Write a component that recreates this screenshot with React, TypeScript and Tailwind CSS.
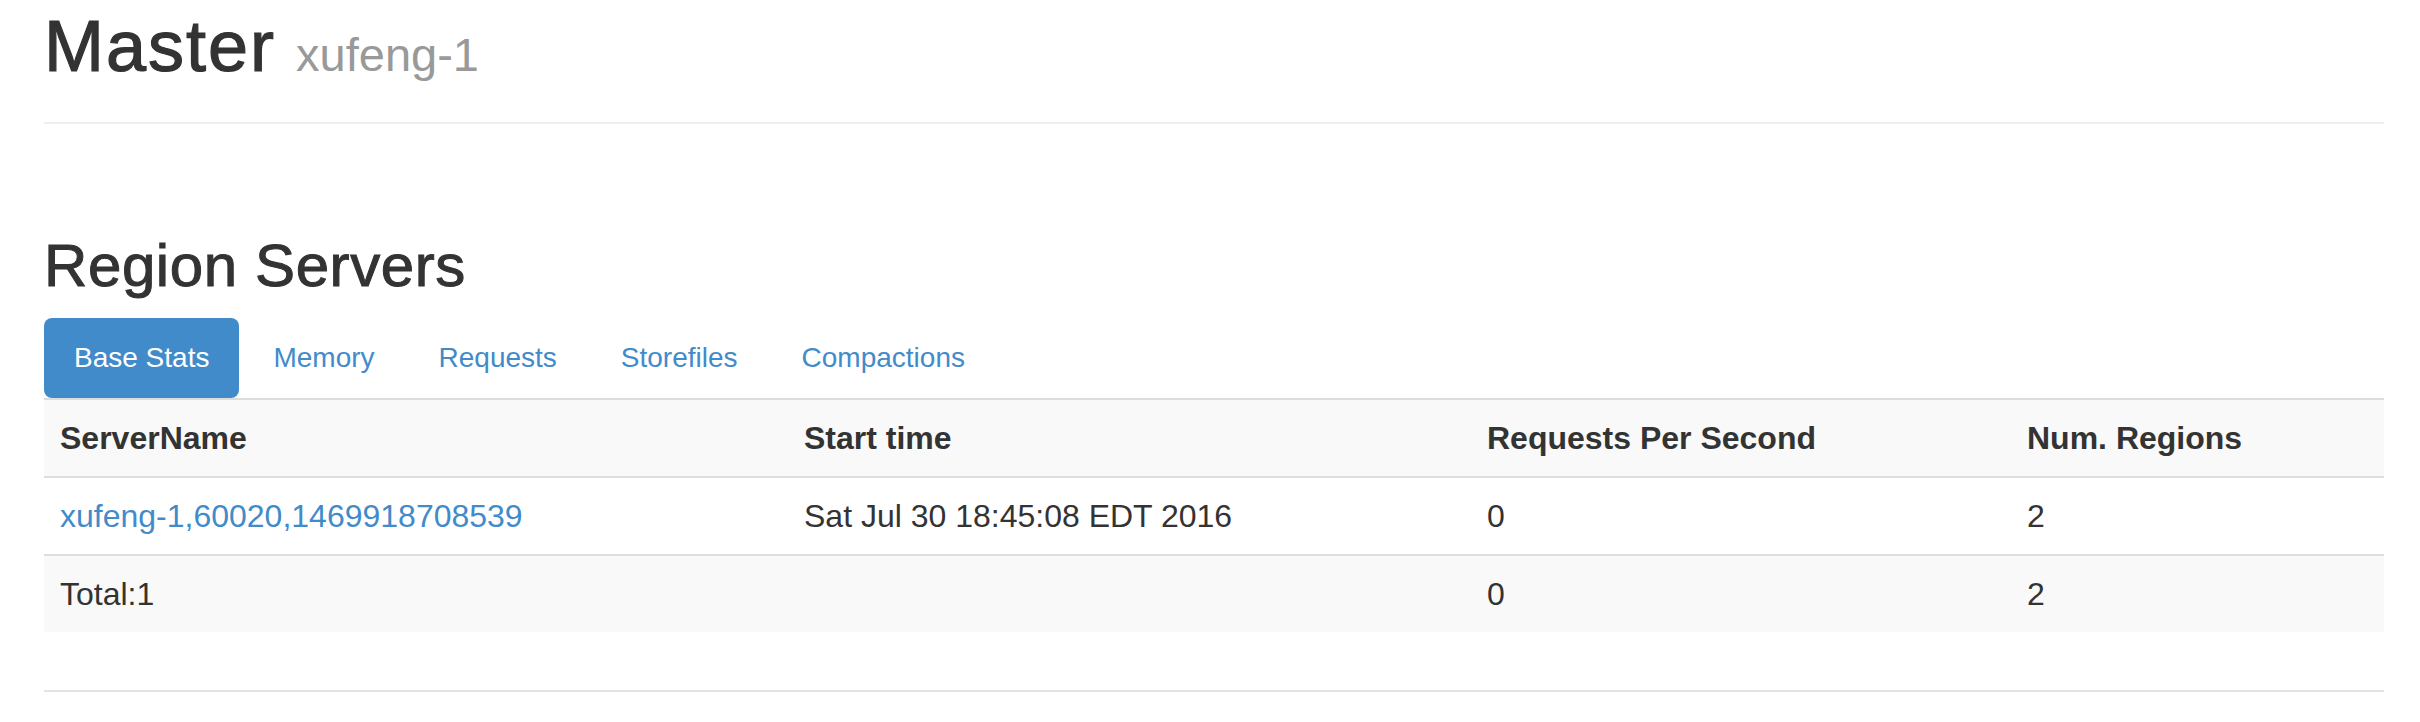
import React from 'react';

const tabs = ['Base Stats', 'Memory', 'Requests', 'Storefiles', 'Compactions'];

const rows: { cells: string[]; link?: boolean; striped: boolean; head?: boolean }[] = [
  { cells: ['ServerName', 'Start time', 'Requests Per Second', 'Num. Regions'], striped: true, head: true },
  { cells: ['xufeng-1,60020,1469918708539', 'Sat Jul 30 18:45:08 EDT 2016', '0', '2'], striped: false, link: true },
  { cells: ['Total:1', '', '0', '2'], striped: true },
];

const App = () => {
  return (
    <div className="min-h-[722px] bg-white font-['Liberation_Sans',Arial,Helvetica,sans-serif] text-[#333]">
      <div className="ml-[44px] w-[2340px] pt-[7px]">
        {/* page header */}
        <div className="border-b-2 border-[#eee] pb-[28px]">
          <h1 className="text-[72px] leading-[79px] font-medium">
            <span className="tracking-[2px] [-webkit-text-stroke:1.2px_#333]">Master</span>{' '}
            <small className="text-[47px] font-normal text-[#999]">xufeng-1</small>
          </h1>
        </div>

        <h2 className="mt-[109px] text-[60px] leading-[66px] font-medium tracking-[0.6px] [-webkit-text-stroke:1px_#333]">
          Region Servers
        </h2>

        {/* nav pills */}
        <ul className="mt-[19px] flex gap-[4px] text-[28px] leading-[40px]">
          {tabs.map((t, i) => (
            <li key={t}>
              <a
                className={
                  i === 0
                    ? 'block rounded-[8px] bg-[#428bca] px-[30px] py-[20px] text-white'
                    : 'block rounded-[8px] px-[30px] py-[20px] text-[#428bca]'
                }
              >
                {t}
              </a>
            </li>
          ))}
        </ul>

        {/* table */}
        <div className="text-[32px] leading-[44px]">
          {rows.map((r, ri) => (
            <div
              key={ri}
              className={`grid grid-cols-[744px_683px_540px_373px] border-t-2 border-[#ddd] ${r.striped ? 'bg-[#f9f9f9]' : 'bg-white'} ${r.head ? 'font-bold' : ''}`}
            >
              {r.cells.map((c, ci) => (
                <div key={ci} className="px-[16px] py-[16px]">
                  {r.link && ci === 0 ? <a className="text-[#428bca]">{c}</a> : c}
                </div>
              ))}
            </div>
          ))}
        </div>

        <div className="mt-[58px] border-t-2 border-[#e3e3e3]" />
      </div>
    </div>
  );
};

export default App;
